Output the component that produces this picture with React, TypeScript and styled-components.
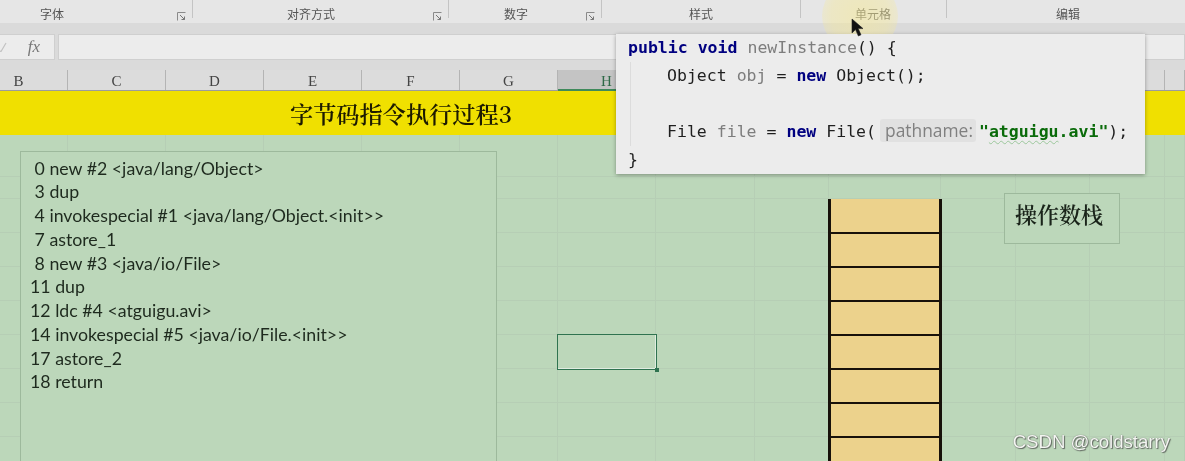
import styled, { createGlobalStyle } from 'styled-components';

const GlobalStyle = createGlobalStyle`
	html, body {
		margin: 0;
		padding: 0;
		background: #bcd7ba;
		overflow: hidden;
	}
`;

const ribbonGroups = [
	{ name: '字体', width: 193, offset: 40, launcher: true },
	{ name: '对齐方式', width: 256, offset: 94, launcher: true },
	{ name: '数字', width: 153, offset: 55, launcher: true },
	{ name: '样式', width: 199, offset: 87, launcher: false },
	{ name: '单元格', width: 146, offset: 54, launcher: false },
	{ name: '编辑', width: 238, offset: 109, launcher: false },
];

const columns = [
	{ label: 'B', width: 68, cut: 30 },
	{ label: 'C', width: 98 },
	{ label: 'D', width: 98 },
	{ label: 'E', width: 98 },
	{ label: 'F', width: 98 },
	{ label: 'G', width: 98 },
	{ label: 'H', width: 98, active: true },
	{ label: '', width: 99 },
	{ label: '', width: 74 },
	{ label: '', width: 112 },
	{ label: '', width: 75 },
	{ label: '', width: 74 },
	{ label: '', width: 75 },
	{ label: '', width: 20 },
];

const rowHeights = [42, 22, 34, 34, 34, 34, 34, 34, 34, 34];

const bytecode = [
	' 0 new #2 <java/lang/Object>',
	' 3 dup',
	' 4 invokespecial #1 <java/lang/Object.<init>>',
	' 7 astore_1',
	' 8 new #3 <java/io/File>',
	'11 dup',
	'12 ldc #4 <atguigu.avi>',
	'14 invokespecial #5 <java/io/File.<init>>',
	'17 astore_2',
	'18 return',
];

const App = () => {
	return (
		<>
			<GlobalStyle />
			<Page>
				<Ribbon>
					{ribbonGroups.map((g) => (
						<RibbonGroup key={g.name} $width={g.width} $offset={g.offset}>
							{g.name}
							{g.launcher && (
								<Launcher viewBox="0 0 9 9">
									<path d="M0.5 8.5V0.5H8.5" fill="none" stroke="#8a8a8a" strokeWidth="1" />
									<path d="M3 3L7.5 7.5M7.5 4.5V7.5H4.5" fill="none" stroke="#777" strokeWidth="1" />
								</Launcher>
							)}
						</RibbonGroup>
					))}
				</Ribbon>
				<Band />
				<FormulaBar>
					<FormulaButtons>
						<CheckMark viewBox="0 0 8 10">
							<path d="M-3 8L1 9.5L6 1" fill="none" stroke="#c2c2c2" strokeWidth="1.2" />
						</CheckMark>
						<Fx>fx</Fx>
					</FormulaButtons>
					<FormulaInput />
				</FormulaBar>
				<ColumnHeaders>
					{columns.map((c, i) => (
						<ColumnHeader key={i} $width={c.width} $cut={c.cut} $active={c.active}>
							{c.label}
						</ColumnHeader>
					))}
				</ColumnHeaders>
				<TitleRow>
					<Title>字节码指令执行过程3</Title>
				</TitleRow>
				<Sheet>
					<SheetLines>
						{rowHeights.map((h, r) => (
							<SheetRow key={r} $height={h}>
								{columns.map((c, i) => (
									<Cell key={i} $width={c.width} />
								))}
							</SheetRow>
						))}
					</SheetLines>
					<SheetObjects>
						<CodeListing>
							{bytecode.map((line) => (
								<CodeLine key={line}>{line}</CodeLine>
							))}
						</CodeListing>
						<Selection />
						<Stack>
							{Array.from({ length: 8 }).map((_, i) => (
								<StackSlot key={i} />
							))}
						</Stack>
						<StackLabel>操作数栈</StackLabel>
					</SheetObjects>
				</Sheet>
				<Popup>
					<PopupLine>
						<Keyword>public</Keyword> <Keyword>void</Keyword> <Muted>newInstance</Muted>() {'{'}
					</PopupLine>
					<MethodBody>
						<PopupLine>
							Object <Muted>obj</Muted> = <Keyword>new</Keyword> Object();
						</PopupLine>
						<PopupLine />
						<PopupLine>
							File <Muted>file</Muted> = <Keyword>new</Keyword> File(
							<Hint>pathname:</Hint>
							<StringLit>"<Squiggle>atguigu</Squiggle>.avi"</StringLit>);
						</PopupLine>
					</MethodBody>
					<PopupLine>{'}'}</PopupLine>
				</Popup>
				<CursorGlow />
				<Cursor viewBox="0 0 14 20">
					<path d="M1 1V15L4.5 11.6L7.4 18L10 16.8L7.2 10.6H12Z" fill="#111" stroke="#222" strokeWidth="0.6" />
				</Cursor>
				<Watermark>CSDN @coldstarry</Watermark>
			</Page>
		</>
	);
};
export default App;

const Page = styled.div`
	position: relative;
	width: 1185px;
	height: 461px;
	overflow: hidden;
	background: #bcd7ba;
	font-family: "Noto Sans CJK SC", sans-serif;
	filter: blur(0.4px);
`;

const Ribbon = styled.div`
	display: flex;
	height: 23px;
	background: #e6e6e6;
`;

const RibbonGroup = styled.div<{ $width: number; $offset: number }>`
	display: flex;
	justify-content: space-between;
	box-sizing: border-box;
	width: ${(p) => p.$width}px;
	height: 18px;
	padding: 5px 6px 0 ${(p) => p.$offset}px;
	border-right: 1px solid #c4c4c4;
	font-size: 12px;
	line-height: 18px;
	color: #555;
	&:last-child {
		border-right: none;
	}
`;

const Launcher = styled.svg`
	width: 9px;
	height: 9px;
	margin-top: 7px;
`;

const Band = styled.div`
	height: 11px;
	background: #dadada;
`;

const FormulaBar = styled.div`
	display: flex;
	gap: 3px;
	height: 36px;
	box-sizing: border-box;
	padding-bottom: 10px;
	background: #dadada;
`;

const FormulaButtons = styled.div`
	width: 55px;
	background: #ececec;
	border: 1px solid #cfcfcf;
	border-left: none;
	box-sizing: border-box;
	display: flex;
	align-items: center;
	justify-content: space-between;
	padding: 0 14px 0 0;
`;

const CheckMark = styled.svg`
	width: 8px;
	height: 10px;
`;

const Fx = styled.span`
	font-family: "Liberation Serif", serif;
	font-style: italic;
	font-size: 17px;
	color: #777;
`;

const FormulaInput = styled.div`
	flex: 1;
	background: #ececec;
	border: 1px solid #cfcfcf;
	box-sizing: border-box;
`;

const ColumnHeaders = styled.div`
	display: flex;
	height: 21px;
	background: #dcdcdc;
	border-bottom: 1px solid #9c9c9c;
	box-sizing: border-box;
`;

const ColumnHeader = styled.div<{ $width: number; $active?: boolean; $cut?: number }>`
	box-sizing: border-box;
	flex: none;
	width: ${(p) => p.$width}px;
	height: ${(p) => (p.$active ? 21 : 20)}px;
	padding: 1px ${(p) => p.$cut ?? 0}px 0 0;
	border-right: 1px solid #b4b4b4;
	border-bottom: ${(p) => (p.$active ? '2px solid #3f8a5c' : 'none')};
	background: ${(p) => (p.$active ? '#c4c4c4' : 'transparent')};
	color: ${(p) => (p.$active ? '#2f6a48' : '#444')};
	font-family: "Liberation Serif", serif;
	font-size: 15px;
	line-height: 20px;
	text-align: center;
`;

const TitleRow = styled.div`
	height: 44px;
	background: #f0e000;
	padding-left: 290px;
	display: flex;
	align-items: center;
`;

const Title = styled.div`
	font-family: "Noto Serif CJK SC", "Noto Sans CJK SC", serif;
	font-size: 23.2px;
	font-weight: 600;
	line-height: 30px;
	color: #1c1a00;
`;

const Sheet = styled.div`
	display: grid;
	height: 326px;
	overflow: hidden;
	> * {
		grid-area: 1 / 1;
	}
`;

const SheetLines = styled.div`
	display: flex;
	flex-direction: column;
`;

const SheetRow = styled.div<{ $height: number }>`
	display: flex;
	flex: none;
	height: ${(p) => p.$height}px;
`;

const Cell = styled.div<{ $width: number }>`
	box-sizing: border-box;
	flex: none;
	width: ${(p) => p.$width}px;
	border-right: 1px solid #b6ceb5;
	border-bottom: 1px solid #b6ceb5;
`;

const SheetObjects = styled.div`
	display: flex;
	align-items: flex-start;
	padding-left: 20px;
`;

const CodeListing = styled.div`
	flex: none;
	width: 477px;
	height: 330px;
	margin-top: 16px;
	box-sizing: border-box;
	padding: 4.5px 0 0 9px;
	background: #bcd7ba;
	border: 1px solid #9db99c;
`;

const CodeLine = styled.div`
	font-family: Lato, sans-serif;
	font-size: 17.75px;
	line-height: 23.75px;
	color: #1e2a1e;
	white-space: pre;
`;

const Selection = styled.div`
	position: relative;
	flex: none;
	width: 100px;
	height: 36px;
	margin: 199px 0 0 60px;
	box-sizing: border-box;
	border: 1.5px solid #2f7350;
	box-shadow: inset 0 -1px 0 #dfece0, inset -1px 0 0 #dfece0;
	&::after {
		content: '';
		position: absolute;
		right: -3px;
		bottom: -3px;
		width: 4px;
		height: 4px;
		background: #2f7350;
	}
`;

const Stack = styled.div`
	flex: none;
	width: 114px;
	margin: 64px 0 0 171px;
	padding-top: 1px;
	box-sizing: border-box;
	background: #ecd28c;
	border-left: 3px solid #17110a;
	border-right: 3px solid #17110a;
`;

const StackSlot = styled.div`
	box-sizing: border-box;
	height: 34px;
	background: #ecd28c;
	border-bottom: 2.5px solid #17110a;
`;

const StackLabel = styled.div`
	flex: none;
	width: 116px;
	height: 51px;
	margin: 58px 0 0 62px;
	box-sizing: border-box;
	padding: 6px 0 0 10px;
	background: #bcd7ba;
	border: 1px solid #9db99c;
	font-family: "Noto Serif CJK SC", "Noto Sans CJK SC", serif;
	font-size: 22px;
	font-weight: 600;
	line-height: 28px;
	color: #1a241a;
`;

const Popup = styled.div`
	position: absolute;
	left: 616px;
	top: 34px;
	width: 529px;
	height: 140px;
	box-sizing: border-box;
	padding-left: 12px;
	background: #ececec;
	box-shadow: 0 1px 4px rgba(0, 0, 0, 0.35);
`;

const MethodBody = styled.div`
	margin-left: 2px;
	padding-left: 36px;
	border-left: 1px solid #dcdcdc;
`;

const PopupLine = styled.div`
	height: 28px;
	font-family: "DejaVu Sans Mono", monospace;
	font-size: 16.55px;
	line-height: 27px;
	color: #1f1f1f;
	white-space: pre;
`;

const Keyword = styled.span`
	font-weight: 700;
	color: #000080;
`;

const Muted = styled.span`
	color: #7d7d7d;
`;

const Hint = styled.span`
	display: inline-block;
	margin: 0 3px 0 4px;
	padding: 0 3px 0 5px;
	height: 23px;
	line-height: 23px;
	border-radius: 3px;
	background: #e1e1e1;
	color: #808080;
	font-family: "Open Sans", sans-serif;
	font-size: 17.4px;
`;

const StringLit = styled.span`
	font-weight: 700;
	color: #0a6b0a;
`;

const Squiggle = styled.span`
	text-decoration: underline wavy #9cc79c 1px;
	text-underline-offset: 3px;
`;

const CursorGlow = styled.div`
	position: absolute;
	left: 822px;
	top: -20px;
	width: 76px;
	height: 72px;
	border-radius: 50%;
	background: radial-gradient(circle, rgba(245, 232, 150, 0.55) 0%, rgba(245, 232, 150, 0.42) 55%, rgba(245, 232, 150, 0) 100%);
	clip-path: inset(0 0 18px 0);
`;

const Cursor = styled.svg`
	position: absolute;
	left: 851px;
	top: 18px;
	width: 14px;
	height: 20px;
`;

const Watermark = styled.div`
	position: absolute;
	right: 15px;
	bottom: 9px;
	font-family: "Liberation Sans", sans-serif;
	font-size: 18.6px;
	line-height: 20px;
	color: #f4f6f2;
	text-shadow: 0 0 1px #555, 1px 1px 1px rgba(60, 60, 60, 0.7);
`;
